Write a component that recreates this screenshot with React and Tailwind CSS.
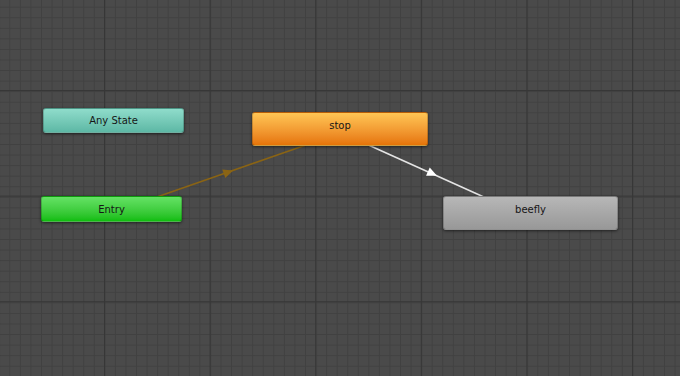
import React from 'react';

// Animator graph: grid canvas, transitions and state nodes
const nodes = [
  { name: 'Any State', x: 43, y: 108, w: 141, h: 25, cls: 'bg-gradient-to-b from-[#8fdccb] to-[#5db8a5]' },
  { name: 'Entry', x: 41, y: 196, w: 141, h: 26, cls: 'bg-gradient-to-b from-[#64e264] to-[#0dbd0d]' },
  { name: 'stop', x: 252, y: 112, w: 176, h: 34, cls: 'bg-gradient-to-b from-[#ffc654] to-[#e57406]', tall: true },
  { name: 'beefly', x: 443, y: 196, w: 175, h: 34, cls: 'bg-gradient-to-b from-[#b7b7b7] to-[#989898]', tall: true },
];

function Arrow({ cx, cy, ux, uy, fill }) {
  const nx = -uy;
  const ny = ux;
  const tip = [cx + ux * 5.5, cy + uy * 5.5];
  const a = [cx - ux * 4.5 + nx * 4.5, cy - uy * 4.5 + ny * 4.5];
  const b = [cx - ux * 4.5 - nx * 4.5, cy - uy * 4.5 - ny * 4.5];
  return <polygon points={`${tip.join(',')} ${a.join(',')} ${b.join(',')}`} fill={fill} />;
}

function Canvas() {
  return (
    <svg className="absolute inset-0" width="680" height="376">
      <defs>
        <pattern id="minor" width="10.56" height="10.56" patternUnits="userSpaceOnUse" x="9.3" y="6.7">
          <rect x="0" y="0" width="1" height="10.56" fill="#414141" />
          <rect x="0" y="0" width="10.56" height="1" fill="#414141" />
        </pattern>
        <pattern id="major" width="105.6" height="105.6" patternUnits="userSpaceOnUse" x="104" y="90">
          <rect x="0" y="0" width="1.2" height="105.6" fill="#373737" />
          <rect x="0" y="0" width="105.6" height="1.2" fill="#373737" />
        </pattern>
      </defs>
      <rect width="680" height="376" fill="url(#minor)" />
      <rect width="680" height="376" fill="url(#major)" />

      <line x1="154" y1="198" x2="306" y2="145" stroke="#8a6414" strokeWidth="1.6" />
      <Arrow cx={228} cy={172.3} ux={0.944} uy={-0.33} fill="#8a6414" />

      <line x1="364" y1="143" x2="486" y2="198" stroke="#e4e4e4" strokeWidth="1.6" />
      <Arrow cx={432} cy={173.5} ux={0.913} uy={0.408} fill="#ffffff" />
    </svg>
  );
}

export default function App() {
  return (
    <div className="relative w-[680px] h-[376px] overflow-hidden bg-[#4a4a4a] font-['DejaVu_Sans',sans-serif]">
      <Canvas />
      {nodes.map((n) => (
        <div
          key={n.name}
          className={`absolute rounded-[3px] border border-black/20 shadow-[0_1px_3px_rgba(0,0,0,0.55)] ${n.cls}`}
          style={{ left: n.x, top: n.y, width: n.w, height: n.h }}
        >
          <div
            className={`flex items-center justify-center text-[10px] text-[#161616] ${n.tall ? 'h-[25px]' : 'h-full'}`}
          >
            {n.name}
          </div>
        </div>
      ))}
    </div>
  );
}
